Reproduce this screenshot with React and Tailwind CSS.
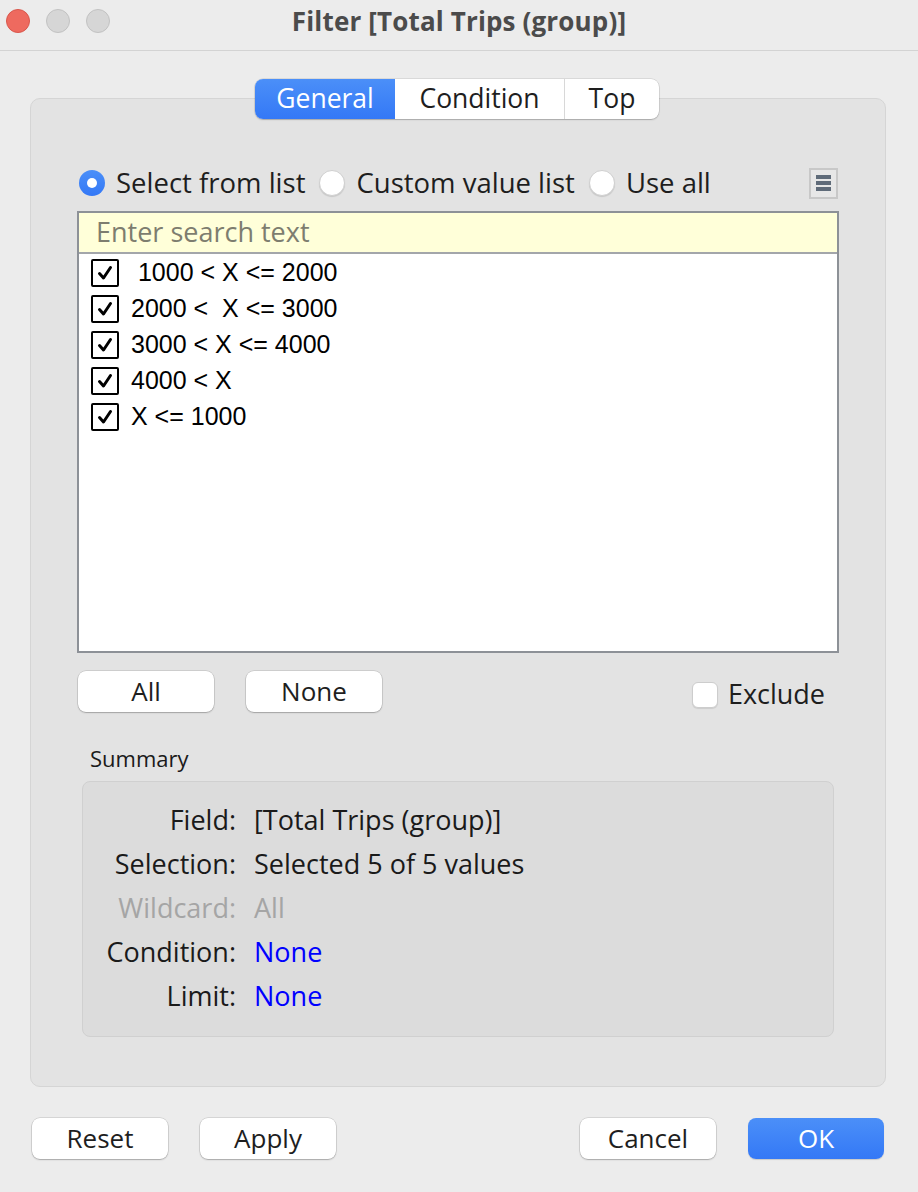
import React from "react";

function Check() {
  return (
    <div className="w-[28px] h-[28px] border-2 border-black rounded-[2px] bg-white flex items-center justify-center shrink-0">
      <svg width="18" height="18" viewBox="0 0 18 18">
        <path d="M3.5 9.5 L7.5 14 L14.5 3.5" fill="none" stroke="black" strokeWidth="3" strokeLinecap="round" strokeLinejoin="round" />
      </svg>
    </div>
  );
}

function Radio({ on }) {
  if (on)
    return (
      <div className="w-[26px] h-[26px] rounded-full bg-linear-to-b from-[#4b8ff8] to-[#3478f6] flex items-center justify-center shrink-0">
        <div className="w-[10px] h-[10px] rounded-full bg-white" />
      </div>
    );
  return <div className="w-[26px] h-[26px] rounded-full bg-white border border-[#d0d0d0] shadow-[0_1px_1px_rgba(0,0,0,0.12)] shrink-0" />;
}

function Btn({ children, primary }) {
  return (
    <div
      className={
        "w-[136px] h-[41px] rounded-[8px] flex items-center justify-center text-[26px] " +
        (primary
          ? "bg-linear-to-b from-[#4b8ff8] to-[#3478f6] text-white shadow-[0_1px_1px_rgba(0,0,0,0.15)]"
          : "bg-white text-[#1e1e1e] shadow-[0_0_0_0.5px_rgba(0,0,0,0.18),0_1px_1.5px_rgba(0,0,0,0.22)]")
      }
    >
      {children}
    </div>
  );
}

export default function App() {
  const items = [" 1000 < X <= 2000", "2000 <  X <= 3000", "3000 < X <= 4000", "4000 < X", "X <= 1000"];
  const rows = [
    ["Field:", "[Total Trips (group)]", "text-[#1a1a1a]", "text-[#1a1a1a]"],
    ["Selection:", "Selected 5 of 5 values", "text-[#1a1a1a]", "text-[#1a1a1a]"],
    ["Wildcard:", "All", "text-[#a5a5a5]", "text-[#a5a5a5]"],
    ["Condition:", "None", "text-[#1a1a1a]", "text-[#0000ff]"],
    ["Limit:", "None", "text-[#1a1a1a]", "text-[#0000ff]"],
  ];
  return (
    <div className="w-[918px] h-[1192px] bg-[#ececec] flex flex-col font-['Open_Sans',sans-serif] text-[#1e1e1e] overflow-hidden">
      {/* title bar */}
      <div className="relative h-[51px] border-b border-[#d3d3d3] shrink-0">
        <div className="flex gap-[16px] pl-[6px] pt-[9px]">
          <div className="w-[24px] h-[24px] rounded-full bg-[#ee6a5f] border border-[#d9574c]" />
          <div className="w-[24px] h-[24px] rounded-full bg-[#d6d6d6] border border-[#c2c2c2]" />
          <div className="w-[24px] h-[24px] rounded-full bg-[#d6d6d6] border border-[#c2c2c2]" />
        </div>
        <div className="absolute inset-x-0 top-0 h-[42px] flex items-center justify-center text-[26px] font-bold text-[#4b4b4b] tracking-[0.15px]">
          Filter [Total Trips (group)]
        </div>
      </div>

      <div className="pl-[30px] pr-[32px] pt-[28px] flex flex-col">
        {/* tabs */}
        <div className="relative z-10 flex justify-center pr-[2px]">
          <div className="flex h-[40px] rounded-[8px] overflow-hidden bg-white shadow-[0_0_0_0.5px_rgba(0,0,0,0.15),0_1px_1.5px_rgba(0,0,0,0.2)] text-[26.5px]">
            <div className="w-[140px] flex items-center justify-center bg-linear-to-b from-[#4b8ff8] to-[#3478f6] text-white">General</div>
            <div className="w-[170px] flex items-center justify-center border-r border-[#d8d8d8]">Condition</div>
            <div className="w-[94px] flex items-center justify-center">Top</div>
          </div>
        </div>

        {/* panel */}
        <div className="-mt-[21px] h-[989px] rounded-[10px] bg-[#e3e3e3] border border-[#d5d5d5] px-[46px] pt-[67px] flex flex-col">
          {/* radio row */}
          <div className="flex items-center h-[34px] text-[27.5px]">
            <div className="flex items-center gap-[14px] ml-[2px]">
              <div className="flex items-center gap-[11px]">
                <Radio on />
                <span>Select from list</span>
              </div>
              <div className="flex items-center gap-[11px]">
                <Radio />
                <span>Custom value list</span>
              </div>
              <div className="flex items-center gap-[11px]">
                <Radio />
                <span>Use all</span>
              </div>
            </div>
            <div className="ml-auto mr-[1px] w-[29px] h-[31px] border-2 border-[#c8c8c8] bg-[#e7e7e7] flex flex-col items-center justify-center gap-[2px]">
              <div className="w-[15px] h-[4px] bg-[#5f6b79]" />
              <div className="w-[15px] h-[4px] bg-[#5f6b79]" />
              <div className="w-[15px] h-[4px] bg-[#5f6b79]" />
            </div>
          </div>

          {/* list box */}
          <div className="mt-[11px] h-[442px] border-2 border-[#8d9197] bg-white flex flex-col">
            <div className="h-[41px] bg-[#ffffd9] border-b-2 border-[#a3a6aa] flex items-center pl-[17px] text-[27px] text-[#7d7d6f]">
              Enter search text
            </div>
            <div className="pt-[1px] flex flex-col font-['Liberation_Sans',Arial,sans-serif] text-[25px] text-black">
              {items.map((t) => (
                <div key={t} className="h-[36px] flex items-center pl-[12px] gap-[12px]">
                  <Check />
                  <span className="whitespace-pre">{t}</span>
                </div>
              ))}
            </div>
          </div>

          {/* All / None / Exclude */}
          <div className="mt-[18px] h-[41px] flex items-center">
            <div className="ml-[1px] flex gap-[32px]">
              <Btn>All</Btn>
              <Btn>None</Btn>
            </div>
            <div className="ml-auto mr-[14px] mt-[6px] flex items-center gap-[10px] text-[27px]">
              <div className="w-[26px] h-[26px] rounded-[6px] bg-white border border-[#cdcdcd] shadow-[0_1px_1px_rgba(0,0,0,0.1)]" />
              <span>Exclude</span>
            </div>
          </div>

          {/* summary */}
          <div className="mt-[31px] pl-[13px] h-[30px] flex items-center text-[22px] text-[#1a1a1a]">Summary</div>
          <div className="mt-[8px] mx-[5px] h-[256px] rounded-[8px] bg-[#dcdcdc] border border-[#d0d0d0] pt-[16px] flex flex-col text-[27px]">
            {rows.map(([l, v, lc, vc]) => (
              <div key={l} className="h-[44px] flex items-center">
                <div className={"w-[153px] text-right " + lc}>{l}</div>
                <div className={"pl-[18px] " + vc}>{v}</div>
              </div>
            ))}
          </div>
        </div>

        {/* bottom buttons */}
        <div className="mt-[31px] h-[40px] flex items-center">
          <div className="ml-[2px] flex gap-[32px]">
            <Btn>Reset</Btn>
            <Btn>Apply</Btn>
          </div>
          <div className="ml-auto mr-[2px] flex gap-[32px]">
            <Btn>Cancel</Btn>
            <Btn primary>OK</Btn>
          </div>
        </div>
      </div>
    </div>
  );
}
